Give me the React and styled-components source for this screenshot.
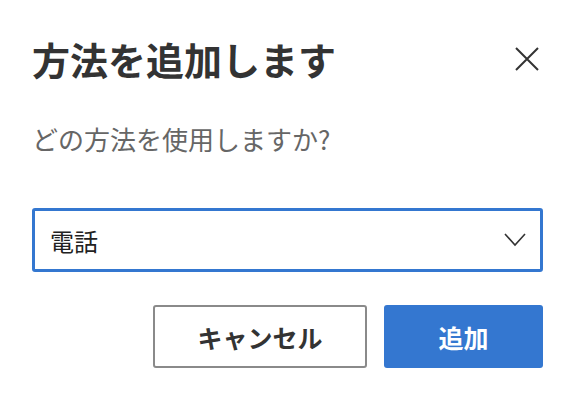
import React from 'react';
import styled, { createGlobalStyle } from 'styled-components';

const Global = createGlobalStyle`
    body {
        margin: 0;
        background: #ffffff;
        font-family: "Noto Sans CJK JP", "Noto Sans", sans-serif;
    }
`

const Dialog = styled.div`
    width: 574px;
    height: 404px;
    box-sizing: border-box;
    padding: 34px 31px 0 32px;
    display: flex;
    flex-direction: column;
`

const Header = styled.div`
    display: flex;
    flex-direction: row;
    align-items: center;
    justify-content: space-between;
    height: 50px;
`

const Title = styled.h1`
    margin: 0;
    font-size: 38px;
    font-weight: 700;
    color: #333333;
    line-height: 50px;
`

const CloseButton = styled.button`
    width: 32px;
    height: 32px;
    padding: 0;
    border: none;
    background: none;
    display: flex;
    align-items: center;
    justify-content: center;
`

const Question = styled.p`
    margin: 36px 0 0;
    font-size: 26px;
    color: #666666;
    line-height: 38px;
`

const Select = styled.div`
    margin-top: 50px;
    height: 64px;
    box-sizing: border-box;
    border: 3px solid #3477d0;
    border-radius: 3px;
    display: flex;
    align-items: center;
    justify-content: space-between;
    padding: 0 14px 0 15px;
    font-size: 24px;
    color: #222222;
`

const Actions = styled.div`
    margin-top: 33px;
    display: flex;
    flex-direction: row;
    justify-content: flex-end;
    gap: 17px;
`

const Button = styled.button`
    height: 63px;
    width: ${props => props.w}px;
    box-sizing: border-box;
    border-radius: 3px;
    font-family: "Noto Sans CJK JP", "Noto Sans", sans-serif;
    font-size: 25px;
    font-weight: 700;
    border: ${props => props.primary ? 'none' : '2px solid #8a8a8a'};
    background: ${props => props.primary ? '#3477d0' : '#ffffff'};
    color: ${props => props.primary ? '#ffffff' : '#333333'};
`

export default function App() {
    return (
        <Dialog>
            <Global />
            <Header>
                <Title>方法を追加します</Title>
                <CloseButton aria-label="閉じる">
                    <svg width="24" height="24" viewBox="0 0 24 24">
                        <path d="M1 1 L23 23 M23 1 L1 23" stroke="#333" strokeWidth="2" fill="none" />
                    </svg>
                </CloseButton>
            </Header>
            <Question>どの方法を使用しますか?</Question>
            <Select>
                <span>電話</span>
                <svg width="22" height="14" viewBox="0 0 22 14">
                    <path d="M1 1 L11 12 L21 1" stroke="#333" strokeWidth="1.6" fill="none" />
                </svg>
            </Select>
            <Actions>
                <Button w={214}>キャンセル</Button>
                <Button primary w={159}>追加</Button>
            </Actions>
        </Dialog>
    );
}
